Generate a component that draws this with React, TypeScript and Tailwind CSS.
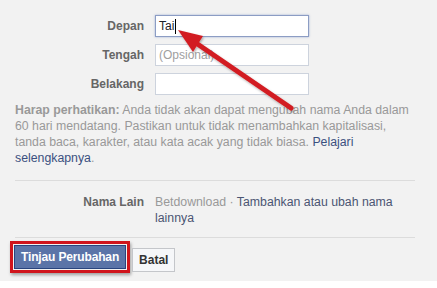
import React from "react";

const labelCls = "text-right text-[12px] font-bold text-[#666]";

export default function App() {
  return (
    <div
      className="relative w-[437px] h-[288px] overflow-hidden bg-[#f2f2f2] text-[12px] leading-[16px]"
      style={{ fontFamily: '"Liberation Sans", Arial, sans-serif' }}
    >
      <div className="flex flex-col h-[281px] px-[15px] pt-[15px]">
        <div className="grid grid-cols-[129px_154px] gap-x-[11px] gap-y-[7px] items-center">
          <div className={labelCls}>Depan</div>
          <div className="h-[22px] border border-[#8c9dc4] bg-white shadow-[0_0_2px_rgba(80,110,180,0.5)] flex items-center px-[3px] text-[12px] text-[#1d2129]">
            Tai<span className="ml-[1px] w-[1px] h-[15px] bg-black" />
          </div>
          <div className={labelCls}>Tengah</div>
          <div className="h-[22px] border border-[#cdd3dd] bg-white flex items-center px-[3px] text-[12px] text-[#a0a0a0]">
            (Opsional)
          </div>
          <div className={labelCls}>Belakang</div>
          <div className="h-[22px] border border-[#cdd3dd] bg-white" />
        </div>

        <p className="mt-[7px] w-[400px] text-[12.3px] leading-[16px] text-[#999]">
          <span className="font-bold">Harap perhatikan:</span> Anda tidak akan dapat mengubah nama Anda dalam 60 hari
          mendatang. Pastikan untuk tidak menambahkan kapitalisasi, tanda baca, karakter, atau kata acak yang tidak
          biasa. <span className="text-[#3b5080]">Pelajari selengkapnya</span>.
        </p>

        <div className="mt-[14px] w-[400px] h-px bg-[#dcdcdc]" />

        <div className="mt-[13px] grid grid-cols-[129px_250px] gap-x-[11px]">
          <div className={labelCls}>Nama Lain</div>
          <div className="text-[12.3px] text-[#999]">
            Betdownload · <span className="text-[#4b5573]">Tambahkan atau ubah nama lainnya</span>
          </div>
        </div>

        <div className="mt-[11px] w-[400px] h-px bg-[#dcdcdc]" />

        <div className="mt-[3px] flex items-start">
          <div className="p-[1px] border-[3px] border-[#d0141c] shadow-[1px_2px_3px_rgba(0,0,0,0.35)] -ml-[5px]">
            <button className="h-[24px] px-[6px] bg-[#5b74a8] border border-[#29447e] text-white font-bold text-[12px] tracking-[-0.15px]">
              Tinjau Perubahan
            </button>
          </div>
          <button className="ml-[2px] mt-[7px] h-[24px] px-[6px] bg-[#f6f7f9] border border-[#c4c6ca] text-[#333] font-bold text-[12px]">
            Batal
          </button>
        </div>
      </div>
      <div className="h-[7px] bg-white" />

      <svg className="absolute left-0 top-0 pointer-events-none" width="437" height="288">
        <defs>
          <filter id="sh" x="-20%" y="-20%" width="140%" height="140%">
            <feDropShadow dx="1" dy="1.5" stdDeviation="1" floodColor="#000" floodOpacity="0.3" />
          </filter>
        </defs>
        <g filter="url(#sh)">
          <line x1="291" y1="108" x2="196" y2="43" stroke="#d21f24" strokeWidth="5" strokeLinecap="round" />
          <polygon points="178,30 203,36 193,52" fill="#d21f24" />
        </g>
      </svg>
    </div>
  );
}
